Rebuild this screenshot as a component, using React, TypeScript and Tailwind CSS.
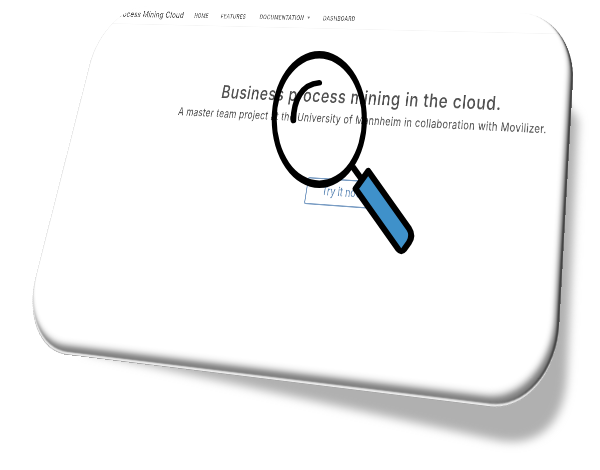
import React from "react";

type Point = [number, number];

const PLANE_W = 1000;
const PLANE_H = 550;

// Corners of the tilted card: top-left, top-right, bottom-right, bottom-left.
const CORNERS: Point[] = [
  [104.4, 5.4],
  [576.8, 13.8],
  [554.4, 415],
  [17.2, 348.7],
];

// Projective transform that maps a w x h box onto a quadrilateral.
function project(w: number, h: number, [p0, p1, p2, p3]: Point[]): string {
  const dx1 = p1[0] - p2[0];
  const dx2 = p3[0] - p2[0];
  const dx3 = p0[0] - p1[0] + p2[0] - p3[0];
  const dy1 = p1[1] - p2[1];
  const dy2 = p3[1] - p2[1];
  const dy3 = p0[1] - p1[1] + p2[1] - p3[1];
  const den = dx1 * dy2 - dx2 * dy1;
  const g = (dx3 * dy2 - dx2 * dy3) / den;
  const k = (dx1 * dy3 - dx3 * dy1) / den;
  const a = p1[0] - p0[0] + g * p1[0];
  const b = p3[0] - p0[0] + k * p3[0];
  const d = p1[1] - p0[1] + g * p1[1];
  const e = p3[1] - p0[1] + k * p3[1];
  const m = [a / w, d / w, 0, g / w, b / h, e / h, 0, k / h, 0, 0, 1, 0, p0[0], p0[1], 0, 1];
  return `matrix3d(${m.join(",")})`;
}

function Shadow() {
  return (
    <svg className="absolute inset-0" width="600" height="470" viewBox="0 0 600 470">
      <defs>
        <filter id="soft" x="-10%" y="-10%" width="120%" height="120%">
          <feGaussianBlur stdDeviation="5" />
        </filter>
      </defs>
      <path
        d="M85 352 L496 440 C540 449 565 422 567 375 L569 330 L578 120 L550 80 L120 300 Z"
        fill="#b0b0b0"
        filter="url(#soft)"
      />
    </svg>
  );
}

function NavBar() {
  return (
    <nav className="flex h-[33px] items-center border-b border-[#f5f5f5] pb-[2px] text-[10px] font-medium text-[#555]">
      <div className="flex w-[192px] justify-end whitespace-nowrap text-[14.5px] font-normal tracking-[0.4px] text-[#444]">
        <span>Business Process Mining Cloud</span>
      </div>
      <span className="ml-[24px] w-[60px] tracking-[0.4px]">HOME</span>
      <span className="w-[86px] tracking-[0.6px]">FEATURES</span>
      <span className="flex w-[137px] items-center gap-[6px] tracking-[0.6px]">
        DOCUMENTATION
        <i className="border-x-[3px] border-t-[4px] border-x-transparent border-t-[#777]" />
      </span>
      <span className="tracking-[0.6px]">DASHBOARD</span>
    </nav>
  );
}

function Hero() {
  return (
    <main className="ml-[192px] flex w-[800px] flex-col items-center whitespace-nowrap pt-[93px] text-[#505050]">
      <h1 className="text-[29px] leading-[34px] font-medium tracking-[1.05px]">
        Business process mining in the cloud.
      </h1>
      <p className="mt-[6px] text-[17.5px] leading-[24px] tracking-[0.5px]">
        A master team project at the University of Mannheim in collaboration with Movilizer.
      </p>
      <button className="mt-[78px] mr-[14px] h-[40px] w-[131px] rounded-[3px] border-2 border-[#7a9dc4] pb-[1px] pl-[12px] text-[17px] text-[#5b86b5]">
        Try it now
      </button>
    </main>
  );
}

function Magnifier() {
  return (
    <svg className="absolute inset-0" width="600" height="470" viewBox="0 0 600 470">
      <path
        fillRule="evenodd"
        d="M271.7 119.5a47.6 68.5 0 1 0 95.2 0a47.6 68.5 0 1 0 -95.2 0ZM276.7 119.5a42.6 61 0 1 1 85.2 0a42.6 61 0 1 1 -85.2 0Z"
      />
      <path
        d="M319.3 82.7C302 84 293.5 100 293.4 120.5"
        fill="none"
        stroke="#000"
        strokeWidth="5.6"
        strokeLinecap="round"
      />
      <path d="M352.5 166.5L361.5 179" stroke="#000" strokeWidth="6" />
      <path
        d="M368.2 171L355.5 188.8L398.5 249.5Q401.3 253 404 249.5L409 242.5Q413.5 235.5 409 228.5Z"
        fill="#3f91ca"
        stroke="#000"
        strokeWidth="6"
        strokeLinejoin="round"
      />
    </svg>
  );
}

export default function App() {
  return (
    <div className="relative h-[470px] w-[600px] overflow-hidden bg-white font-['Inter','Liberation_Sans',sans-serif]">
      <Shadow />
      <div
        className="absolute top-0 left-0 h-[550px] w-[1000px] origin-top-left overflow-hidden rounded-[106px] bg-white"
        style={{ transform: project(PLANE_W, PLANE_H, CORNERS) }}
      >
        <NavBar />
        <Hero />
        <div className="pointer-events-none absolute inset-0 rounded-[106px] shadow-[inset_0_-1px_0_#aaa,inset_0_-4px_2px_#eee,inset_-4px_-3px_3px_#3a3a3a,inset_-6px_-10px_6px_#7c7c7c,inset_-9px_-14px_10px_#b0b0b0,inset_2px_-1px_1px_#e8e8e8]" />
      </div>
      <Magnifier />
    </div>
  );
}
